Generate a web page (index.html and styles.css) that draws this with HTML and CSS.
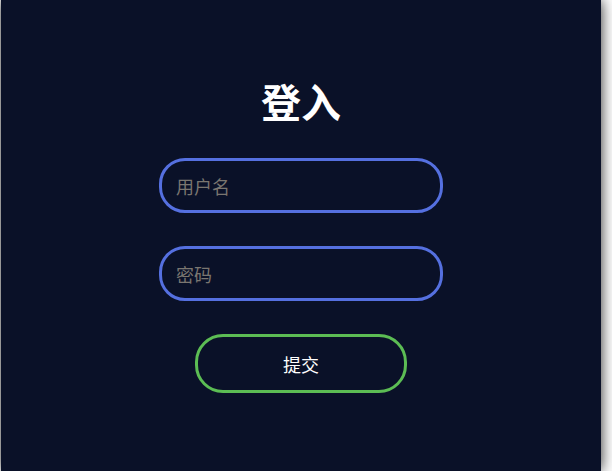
FILE: index.html
```html
<!DOCTYPE html>
<html lang="zh">
<head>
<meta charset="utf-8">
<title>登入</title>
<link rel="stylesheet" href="styles.css">
</head>
<body>
<div class="panel">
  <form class="login">
    <h1 class="title">登入</h1>
    <input class="field" type="text" placeholder="用户名">
    <input class="field" type="password" placeholder="密码">
    <button class="submit" type="button">提交</button>
  </form>
</div>
</body>
</html>
```

FILE: styles.css
```css
html, body {
  margin: 0;
  padding: 0;
  height: 100%;
}
body {
  background: #ffffff;
  font-family: "Noto Sans CJK SC", "Noto Sans", sans-serif;
  overflow: hidden;
}
.panel {
  margin-left: 1px;
  width: 600px;
  height: 100%;
  background: #0a1128;
  box-shadow: 0 0 14px rgba(0, 0, 0, 0.85);
}
.login {
  display: flex;
  flex-direction: column;
  align-items: center;
  padding-top: 77px;
}
.title {
  margin: 0 0 33px 0;
  font-size: 40px;
  line-height: 48px;
  font-weight: 700;
  color: #ffffff;
}
.field {
  box-sizing: border-box;
  width: 284px;
  height: 55px;
  margin-bottom: 33px;
  padding: 0 14px;
  border: 3px solid #5570e0;
  border-radius: 26px;
  background: transparent;
  color: #ffffff;
  font-family: inherit;
  font-size: 18px;
  outline: none;
}
.field::placeholder {
  color: #7a7670;
}
.submit {
  box-sizing: border-box;
  width: 212px;
  height: 59px;
  border: 3px solid #5cbd54;
  border-radius: 28px;
  background: transparent;
  color: #ffffff;
  font-family: inherit;
  font-size: 18px;
  cursor: pointer;
}
```
